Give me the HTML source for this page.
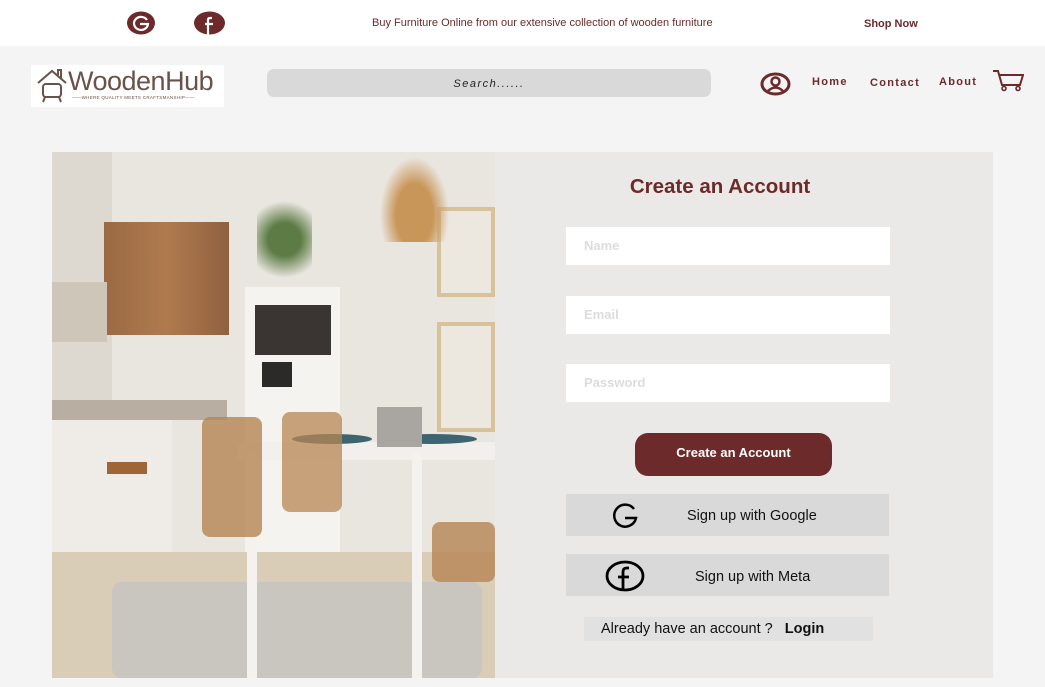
<!DOCTYPE html>
<html><head><meta charset="utf-8"><style>
*{margin:0;padding:0;box-sizing:border-box}
body{width:1045px;height:687px;background:#f4f4f4;font-family:"Liberation Sans",sans-serif;position:relative;overflow:hidden}
.a{position:absolute}
.top{left:0;top:0;width:1045px;height:46px;background:#fff}
.br{color:#6c2a2a}
.field{position:absolute;left:566px;width:324px;height:38px;background:#fff;color:#dcdcdc;font-weight:bold;font-size:13px;padding:11px 0 0 18px}
.soc{position:absolute;left:566px;width:323px;height:42px;background:#d9d9d9;font-size:14.5px;color:#111}
</style></head><body>
<div class="a top"></div>
<svg class="a" style="left:127px;top:11px" width="28" height="24" viewBox="0 0 28 24"><ellipse cx="14" cy="12" rx="14" ry="11.5" fill="#6c2a2a"/><path d="M20 9 A7 6.5 0 1 0 21 13 H13" stroke="#fff" stroke-width="2.2" fill="none"/></svg>
<svg class="a" style="left:194px;top:11px" width="31" height="24" viewBox="0 0 31 24"><ellipse cx="15.5" cy="12" rx="15.5" ry="11.5" fill="#6c2a2a"/><path d="M18 7 H16 Q14 7 14 9 V24 M11 13 H19" stroke="#fff" stroke-width="2.2" fill="none"/></svg>
<div class="a br" style="left:372px;top:17px;font-size:11px">Buy Furniture Online from our extensive collection of wooden furniture</div>
<div class="a br" style="left:864px;top:18px;font-size:11px;font-weight:bold">Shop Now</div>

<div class="a" style="left:31px;top:65px;width:193px;height:42px;background:#fff"></div>
<svg class="a" style="left:36px;top:67px" width="32" height="38" viewBox="0 0 32 38"><path d="M2 16 L16 4 L30 16 M22 8 V3 H25 V11" stroke="#6b5248" stroke-width="2" fill="none"/><rect x="7" y="17" width="18" height="13" rx="3" stroke="#6b5248" stroke-width="2" fill="none"/><path d="M9 30 L7 35 M23 30 L25 35" stroke="#6b5248" stroke-width="2"/></svg>
<div class="a" style="left:68px;top:66px;font-size:27px;color:#6b5248;letter-spacing:-0.5px">WoodenHub</div>
<div class="a" style="left:72px;top:95px;font-size:4.5px;color:#6b5248;letter-spacing:0.3px">——WHERE QUALITY MEETS CRAFTSMANSHIP——</div>

<div class="a" style="left:267px;top:69px;width:444px;height:28px;background:#d9d9d9;border-radius:7px;font-size:11px;font-style:italic;letter-spacing:1.5px;color:#222;text-align:center;padding-top:9px">Search......</div>
<svg class="a" style="left:760px;top:72px" width="31" height="24" viewBox="0 0 31 24"><ellipse cx="15.5" cy="12" rx="13.5" ry="10" stroke="#6c2a2a" stroke-width="3" fill="none"/><circle cx="15.5" cy="9.5" r="4" stroke="#6c2a2a" stroke-width="2.5" fill="none"/><path d="M8 19 Q15.5 12 23 19" stroke="#6c2a2a" stroke-width="2.5" fill="none"/></svg>
<div class="a br" style="left:812px;top:76px;font-size:11px;font-weight:bold;letter-spacing:1.3px">Home</div>
<div class="a br" style="left:870px;top:77px;font-size:11px;font-weight:bold;letter-spacing:1.3px">Contact</div>
<div class="a br" style="left:939px;top:76px;font-size:11px;font-weight:bold;letter-spacing:1.3px">About</div>
<svg class="a" style="left:992px;top:69px" width="32" height="23" viewBox="0 0 32 23"><path d="M1 2 H6 L10 16 H28 L31 6 H8" stroke="#6c2a2a" stroke-width="2" fill="none"/><circle cx="12" cy="19.5" r="2" stroke="#6c2a2a" stroke-width="1.6" fill="none"/><circle cx="26" cy="19.5" r="2" stroke="#6c2a2a" stroke-width="1.6" fill="none"/></svg>

<!-- image -->
<div class="a" style="left:52px;top:152px;width:443px;height:526px;background:#e9e5df;overflow:hidden">
 <div class="a" style="left:0;top:0;width:60px;height:526px;background:#ddd8d0"></div>
 <div class="a" style="left:52px;top:70px;width:125px;height:113px;background:linear-gradient(90deg,#9a6a44,#b07a4e,#8f6140)"></div>
 <div class="a" style="left:0;top:130px;width:55px;height:60px;background:#cfc6ba"></div>
 <div class="a" style="left:0;top:248px;width:175px;height:20px;background:#b8aea2"></div>
 <div class="a" style="left:0;top:268px;width:120px;height:140px;background:#efebe6"></div>
 <div class="a" style="left:193px;top:135px;width:95px;height:300px;background:#f5f3f0"></div>
 <div class="a" style="left:203px;top:153px;width:76px;height:50px;background:#3a3532"></div>
 <div class="a" style="left:210px;top:210px;width:30px;height:25px;background:#2b2a28"></div>
 <div class="a" style="left:205px;top:40px;width:55px;height:95px;background:radial-gradient(circle,#5d7c45 30%,transparent 70%)"></div>
 <div class="a" style="left:385px;top:55px;width:58px;height:90px;border:4px solid #d8c29a;background:#ece7df"></div>
 <div class="a" style="left:385px;top:170px;width:58px;height:110px;border:4px solid #d8c29a;background:#ece7df"></div>
 <div class="a" style="left:325px;top:0;width:75px;height:90px;background:radial-gradient(ellipse at 50% 70%,#c9965a 35%,transparent 65%)"></div>
 <div class="a" style="left:0;top:400px;width:443px;height:126px;background:#dacdb7"></div>
 <div class="a" style="left:60px;top:430px;width:370px;height:96px;background:#c9c5bf;border-radius:10px"></div>
 <div class="a" style="left:185px;top:290px;width:258px;height:18px;background:#f2f0ec"></div>
 <div class="a" style="left:195px;top:300px;width:10px;height:226px;background:#f4f2ef"></div>
 <div class="a" style="left:360px;top:300px;width:10px;height:226px;background:#f4f2ef"></div>
 <div class="a" style="left:240px;top:282px;width:80px;height:10px;background:#3d6470;border-radius:50%"></div>
 <div class="a" style="left:335px;top:282px;width:90px;height:10px;background:#3d6470;border-radius:50%"></div>
 <div class="a" style="left:150px;top:265px;width:60px;height:120px;background:#b58553;opacity:.8;border-radius:8px"></div>
 <div class="a" style="left:230px;top:260px;width:60px;height:100px;background:#b58553;opacity:.75;border-radius:8px"></div>
 <div class="a" style="left:380px;top:370px;width:63px;height:60px;background:#b58553;opacity:.8;border-radius:8px"></div>
 <div class="a" style="left:55px;top:310px;width:40px;height:12px;background:#9e6537"></div>
 <div class="a" style="left:325px;top:255px;width:45px;height:40px;background:#a9a6a1"></div>
</div>

<div class="a" style="left:495px;top:152px;width:498px;height:526px;background:#ebe9e7"></div>
<div class="a br" style="left:495px;top:175px;width:450px;text-align:center;font-size:20.5px;font-weight:bold">Create an Account</div>
<div class="field" style="top:227px">Name</div>
<div class="field" style="top:296px">Email</div>
<div class="field" style="top:364px">Password</div>
<div class="a" style="left:635px;top:433px;width:197px;height:43px;background:#6c2a2a;border-radius:13px;color:#fff;font-weight:bold;font-size:13px;text-align:center;padding-top:12px">Create an Account</div>
<div class="soc" style="top:494px"><svg class="a" style="left:44px;top:9px" width="30" height="26" viewBox="0 0 30 26"><path d="M24 6 A11 11 0 1 0 26 15 H15" stroke="#000" stroke-width="2.5" fill="none"/></svg><span class="a" style="left:121px;top:14px">Sign up with Google</span></div>
<div class="soc" style="top:554px"><svg class="a" style="left:38px;top:6px" width="42" height="32" viewBox="0 0 42 32"><ellipse cx="21" cy="16" rx="18" ry="14" stroke="#000" stroke-width="2.8" fill="none"/><path d="M25 8 H23 Q19 8 19 12 V30 M14 17 H25" stroke="#000" stroke-width="2.8" fill="none"/></svg><span class="a" style="left:129px;top:15px">Sign up with Meta</span></div>
<div class="a" style="left:584px;top:617px;width:289px;height:24px;background:#e1e1e1;font-size:14.5px;padding:4px 0 0 17px;color:#111">Already have an account ? &nbsp;&nbsp;<b>Login</b></div>
</body></html>
